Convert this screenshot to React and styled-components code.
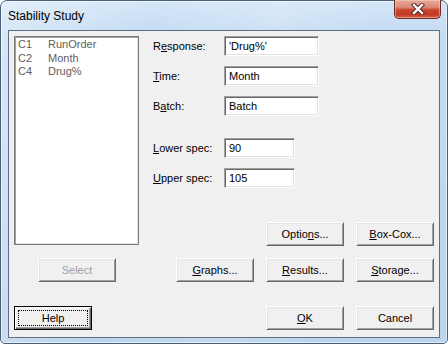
import React from "react";
import styled, { createGlobalStyle, css } from "styled-components";

const Global = createGlobalStyle`
  html, body { margin: 0; padding: 0; background: #ffffff; }
  body { width: 448px; height: 344px; overflow: hidden; }
  * { box-sizing: border-box; }
`;

const Window = styled.div`
  width: 448px;
  height: 344px;
  display: flex;
  flex-direction: column;
  padding: 0 7px 5px 7px;
  border: 1px solid #4a5f78;
  border-radius: 7px 7px 5px 5px;
  background:
    linear-gradient(100deg, rgba(255,255,255,0.35) 0%, rgba(255,255,255,0) 30%, rgba(255,255,255,0.15) 55%, rgba(255,255,255,0) 75%),
    linear-gradient(180deg, #d4e6f8 0%, #c4dbf2 10%, #bcd4ec 100%);
  box-shadow: inset 0 0 0 1px rgba(255,255,255,0.55);
  font-family: "Liberation Sans", Arial, sans-serif;
`;

const TitleBar = styled.div`
  height: 29px;
  display: flex;
  align-items: center;
`;

const Title = styled.span`
  font-family: "Liberation Sans", Arial, sans-serif;
  font-size: 12px;
  color: #000;
  padding-left: 0px;
`;

const CloseButton = styled.div`
  margin-left: auto;
  margin-right: -1px;
  align-self: flex-start;
  margin-top: -1px;
  width: 47px;
  height: 19px;
  border: 1px solid #6e2a22;
  border-top: none;
  border-radius: 0 0 5px 5px;
  background: linear-gradient(180deg, #e9a898 0%, #dc8a78 40%, #c8452f 55%, #c33a24 80%, #d2614a 100%);
  box-shadow: inset 0 0 0 1px rgba(255,220,210,0.45);
  display: flex;
  align-items: center;
  justify-content: center;
`;

const Client = styled.div`
  flex: 1;
  border: 1px solid #5c6f86;
  background: #f0f0f0;
  padding: 5px 5px 7px 5px;
  display: flex;
  flex-direction: column;
  font-size: 11px;
  color: #000;
`;

const Main = styled.div`
  display: flex;
  gap: 14px;
`;

const LeftCol = styled.div`
  width: 125px;
  display: flex;
  flex-direction: column;
`;

const ListBox = styled.div`
  height: 209px;
  background: #fff;
  border: 1px solid #7c7c7c;
  box-shadow: inset 1px 1px 0 #a0a0a0, inset -1px -1px 0 #e3e3e3;
  padding: 1px 3px;
`;

const ListRow = styled.div`
  display: flex;
  height: 13.5px;
  line-height: 13.5px;
  color: #5e5e5e;
  font-size: 11px;
`;

const ColCode = styled.span`
  width: 30px;
`;

const RightCol = styled.div`
  width: 281px;
  display: flex;
  flex-direction: column;
`;

const FieldRow = styled.div`
  display: flex;
  align-items: center;
  height: 20px;
  margin-top: ${(p) => p.$gap}px;
`;

const Label = styled.span`
  width: 71px;
  font-size: 11px;
`;

const TextBox = styled.div`
  width: ${(p) => p.$w}px;
  height: 20px;
  background: #fff;
  border-top: 1px solid #a0a0a0;
  border-left: 1px solid #a0a0a0;
  border-right: 1px solid #ffffff;
  border-bottom: 1px solid #ffffff;
  box-shadow: inset 1px 1px 0 #696969, inset -1px -1px 0 #e3e3e3;
  padding: 0 4px;
  display: flex;
  align-items: center;
  font-size: 11px;
`;

const ButtonRow = styled.div`
  display: flex;
  justify-content: ${(p) => p.$justify || "flex-end"};
  gap: 12px;
  margin-top: ${(p) => p.$gap}px;
`;

const Button = styled.div`
  width: 78px;
  height: 24px;
  background: #f0f0f0;
  border-top: 1px solid #ffffff;
  border-left: 1px solid #ffffff;
  border-right: 1px solid #696969;
  border-bottom: 1px solid #696969;
  box-shadow: inset 1px 1px 0 #e3e3e3, inset -1px -1px 0 #a0a0a0;
  display: flex;
  align-items: center;
  justify-content: center;
  font-size: 11px;
  color: ${(p) => (p.$disabled ? "#a0a0a0" : "#000")};
  ${(p) =>
    p.$default &&
    css`
      border: 1px solid #000;
      box-shadow: inset 1px 1px 0 #ffffff, inset -1px -1px 0 #696969, inset -2px -2px 0 #a0a0a0;
      outline: 1px dotted #000;
      outline-offset: -5px;
    `}
  ${(p) => p.$indent && css`margin-left: ${p.$indent}px;`}
`;

const SelectWrap = styled.div`
  margin-top: 13px;
  margin-left: 24px;
`;

const BottomRow = styled.div`
  display: flex;
  justify-content: space-between;
  margin-top: 24px;
`;

const Group = styled.div`
  display: flex;
  gap: 12px;
`;

const CloseGlyph = () => (
  <svg width="14" height="12" viewBox="0 0 14 12">
    <path d="M3 2 L11 10 M11 2 L3 10" stroke="#4a2320" strokeWidth="4.2" strokeLinecap="square" fill="none" />
    <path d="M3 2 L11 10 M11 2 L3 10" stroke="#ffffff" strokeWidth="2.4" strokeLinecap="square" fill="none" />
  </svg>
);

const columns = [
  ["C1", "RunOrder"],
  ["C2", "Month"],
  ["C4", "Drug%"],
];

export default function App() {
  return (
    <>
      <Global />
      <Window>
        <TitleBar>
          <Title>Stability Study</Title>
          <CloseButton>
            <CloseGlyph />
          </CloseButton>
        </TitleBar>
        <Client>
          <Main>
            <LeftCol>
              <ListBox>
                {columns.map(([c, n]) => (
                  <ListRow key={c}>
                    <ColCode>{c}</ColCode>
                    <span>{n}</span>
                  </ListRow>
                ))}
              </ListBox>
              <SelectWrap>
                <Button $disabled>Select</Button>
              </SelectWrap>
            </LeftCol>
            <RightCol>
              <FieldRow $gap={0}>
                <Label>R<u>e</u>sponse:</Label>
                <TextBox $w={95}>'Drug%'</TextBox>
              </FieldRow>
              <FieldRow $gap={10}>
                <Label><u>T</u>ime:</Label>
                <TextBox $w={95}>Month</TextBox>
              </FieldRow>
              <FieldRow $gap={10}>
                <Label>B<u>a</u>tch:</Label>
                <TextBox $w={95}>Batch</TextBox>
              </FieldRow>
              <FieldRow $gap={22}>
                <Label><u>L</u>ower spec:</Label>
                <TextBox $w={71}>90</TextBox>
              </FieldRow>
              <FieldRow $gap={10}>
                <Label><u>U</u>pper spec:</Label>
                <TextBox $w={71}>105</TextBox>
              </FieldRow>
              <ButtonRow $gap={34}>
                <Button>Optio<u>n</u>s...</Button>
                <Button><u>B</u>ox-Cox...</Button>
              </ButtonRow>
              <ButtonRow $gap={12}>
                <Button><u>G</u>raphs...</Button>
                <Button><u>R</u>esults...</Button>
                <Button><u>S</u>torage...</Button>
              </ButtonRow>
            </RightCol>
          </Main>
          <BottomRow>
            <Button $default>Help</Button>
            <Group>
              <Button><u>O</u>K</Button>
              <Button>Cancel</Button>
            </Group>
          </BottomRow>
        </Client>
      </Window>
    </>
  );
}
